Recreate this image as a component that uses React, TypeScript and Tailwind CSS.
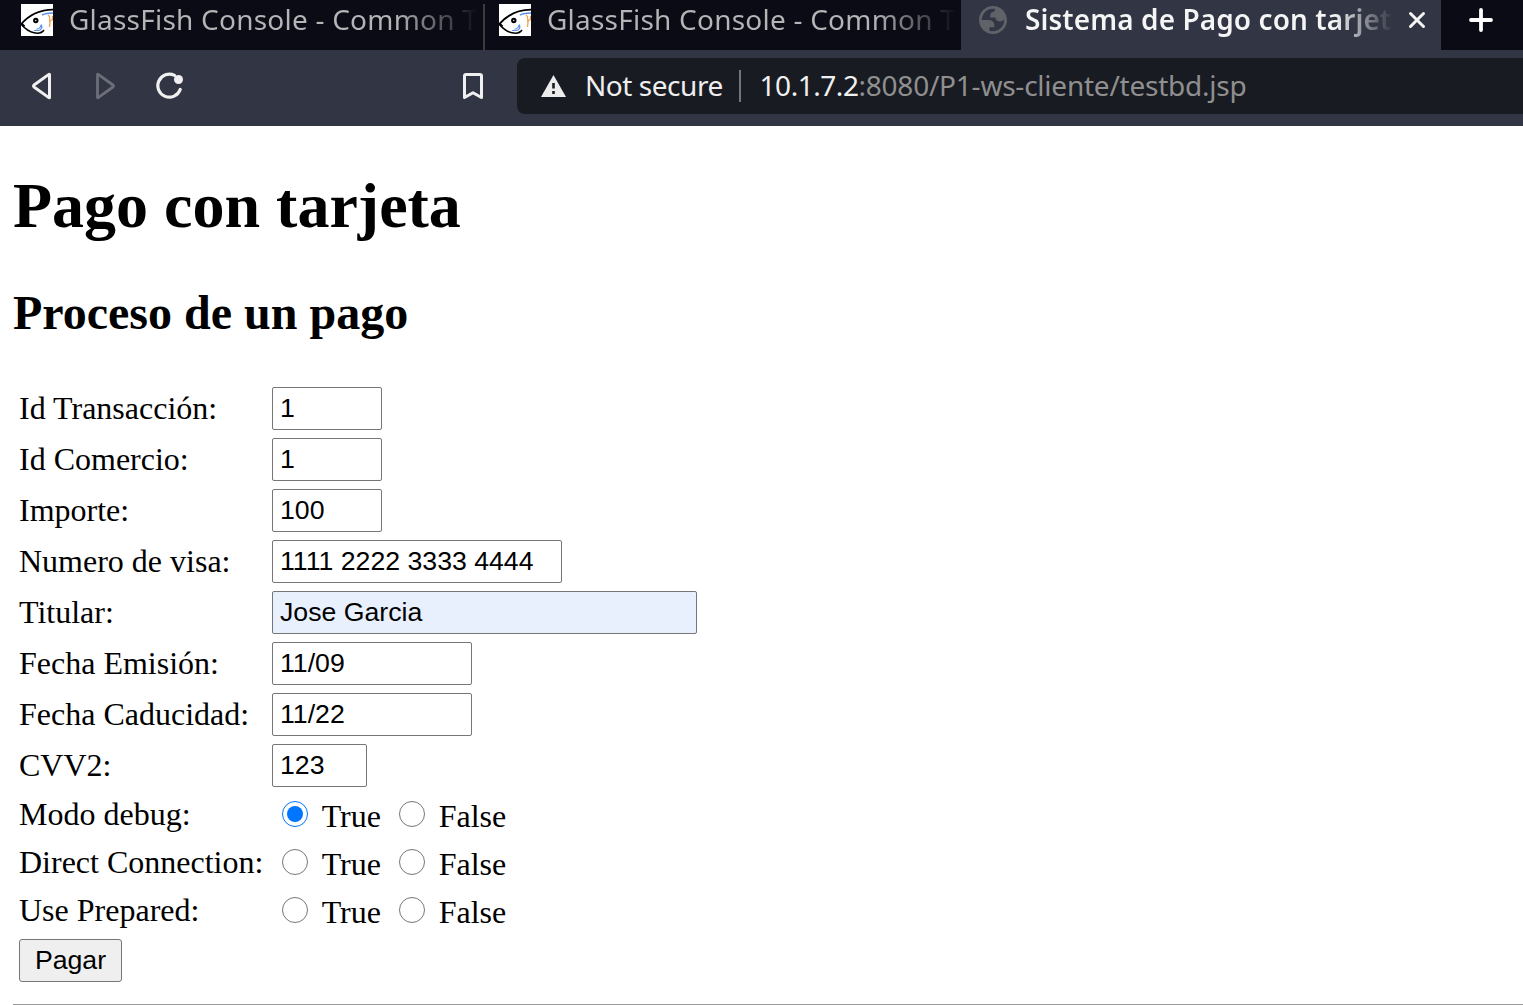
import type { ReactNode } from 'react';

const chromeFont = "font-['Noto_Sans',sans-serif]";

function FishIcon() {
  return (
    <svg width="32" height="32" viewBox="0 0 32 32" fill="none" className="shrink-0 bg-white">
      <path d="M21 11C24 9.500 28 9 32 9" stroke="#5b8fee" strokeWidth="1.700" />
      <path d="M20.300 20.500C21.500 23 20.500 26.500 17 26.500H13M20 21C19.500 23.500 18 25 15.500 25.200" stroke="#5b8fee" strokeWidth="1.200" />
      <path d="M27 11C28.800 12 29 14 28.700 17C29.500 19 28.500 20.500 28.500 23M29 17L31.500 15.500V12" stroke="#f0a04b" strokeWidth="1.300" />
      <path d="M0 20.500C7 12 18 6 32 5.700" stroke="#000" strokeWidth="1.800" />
      <path d="M0 20C3 23.500 7 27.500 13 28.800C17 29.600 21 29 23 26" stroke="#000" strokeWidth="1.500" />
      <path d="M0.500 19.500L3.500 22.500" stroke="#000" strokeWidth="2" />
      <circle cx="14.800" cy="16.500" r="1.700" stroke="#000" strokeWidth="2" />
    </svg>
  );
}

function InactiveTab({ divider }: { divider?: boolean }) {
  return (
    <div className="relative flex h-[50px] w-[478px] shrink-0 pl-[21px]">
      <div className="pt-1"><FishIcon /></div>
      <div className="ml-4 h-[50px] w-[410px] overflow-hidden whitespace-nowrap bg-gradient-to-r from-[#b5b5b7] from-80% to-transparent bg-clip-text text-[28px] leading-[38px] tracking-[0.22px] text-transparent">
        GlassFish Console - Common T
      </div>
      {divider && <div className="absolute top-1 right-[-7px] h-[46px] w-[2px] bg-[#3c3c3e]" />}
    </div>
  );
}

function Field({ label, value, width, filled }: { label: string; value: string; width: string; filled?: boolean }) {
  return (
    <label className="flex h-[43px] items-center">
      <span className="w-[253px] pb-[2px] leading-9">{label}</span>
      <input
        defaultValue={value}
        className={`h-[43px] rounded-[2px] border border-[#767676] px-[7px] font-['Liberation_Sans',sans-serif] text-[26.667px] outline-none ${width} ${filled ? 'bg-[#e8f0fe]' : 'bg-white'}`}
      />
    </label>
  );
}

function Radio({ checked, children }: { checked?: boolean; children: ReactNode }) {
  return (
    <span className="flex items-center">
      <span className={`mb-[2px] flex size-[26px] items-center justify-center rounded-full border ${checked ? 'border-[#0075ff]' : 'border-[#767676]'}`}>
        {checked && <span className="size-4 rounded-full bg-[#0075ff]" />}
      </span>
      <span className="ml-[13.700px] pt-[2px] leading-9">{children}</span>
    </span>
  );
}

function RadioRow({ label, checked }: { label: string; checked?: boolean }) {
  return (
    <div className="flex h-12 items-center">
      <span className="w-[263px] pb-[2px] leading-9">{label}</span>
      <div className="w-[117px]"><Radio checked={checked}>True</Radio></div>
      <Radio>False</Radio>
    </div>
  );
}

export default function App() {
  return (
    <div className="h-[1005px] w-[1523px] overflow-hidden bg-white text-black">
      <header className={chromeFont}>
        <div className="flex h-[50px] bg-[#0b0b15]">
          <InactiveTab divider />
          <InactiveTab />
          <div className="ml-[5px] flex h-[50px] w-[480px] shrink-0 bg-[#323543] pl-[18px]">
            <svg width="28" height="28" viewBox="2 2 20 20" fill="#5f6368" className="mt-[6px] shrink-0">
              <path fillRule="evenodd" d="M12 2C6.480 2 2 6.480 2 12s4.480 10 10 10 10-4.480 10-10S17.520 2 12 2zM4 12h4.400c3.407.022 4.922 1.730 4.543 5.127H9.488v2.470a8.004 8.004 0 0 0 10.498-8.083C19.327 12.504 18.332 13 17 13c-2.137 0-3.206-.916-3.206-2.750h-3.748c-.274-2.728.683-4.092 2.870-4.092 0-.975.327-1.597.811-1.970A8.004 8.004 0 0 0 4 12z" />
            </svg>
            <div className="ml-[18px] h-[50px] w-[368px] overflow-hidden whitespace-nowrap bg-gradient-to-r from-[#f5f5f5] from-84% to-transparent bg-clip-text text-[28px] leading-[38px] font-semibold tracking-[0.08px] text-transparent">
              Sistema de Pago con tarjet
            </div>
            <svg width="18" height="18" viewBox="0 0 18 18" className="mt-[11px] ml-[15px]" fill="none" stroke="#f4f4f4" strokeWidth="3" strokeLinecap="round">
              <path d="M2.500 2.500L15.500 15.500M15.500 2.500L2.500 15.500" />
            </svg>
          </div>
          <svg width="24" height="24" viewBox="0 0 24 24" className="mt-2 ml-7" fill="none" stroke="#fff" strokeWidth="3.800" strokeLinecap="round">
            <path d="M12 2V22M2 12H22" />
          </svg>
        </div>
        <div className="flex h-[76px] items-center bg-[#323543] pb-1">
          <svg width="20" height="28" viewBox="0 0 20 28" className="ml-8 shrink-0" fill="none" stroke="#f0f0f0" strokeWidth="3" strokeLinejoin="round">
            <path d="M17.500 2.600V25.400Q17.500 26.200 16.500 25.400L2 15Q1 14 2 13L16.500 2.600Q17.500 1.800 17.500 2.600Z" />
          </svg>
          <svg width="20" height="28" viewBox="0 0 20 28" className="ml-11 shrink-0" fill="none" stroke="#6c6e79" strokeWidth="2.800" strokeLinejoin="round">
            <path d="M1.500 2.600V25.400Q1.500 26.200 2.500 25.400L17 15Q18 14 17 13L2.500 2.600Q1.500 1.800 1.500 2.600Z" />
          </svg>
          <svg width="28" height="28" viewBox="0 0 28 28" className="ml-10 shrink-0" fill="none" stroke="#f0f0f0" strokeWidth="3.200" strokeLinecap="round">
            <path d="M18.500 3.400A11.500 11.500 0 1 0 24.200 17.500" />
            <circle cx="22.500" cy="7.500" r="4.500" fill="#f0f0f0" stroke="none" />
          </svg>
          <svg width="22" height="28" viewBox="0 0 22 28" className="ml-[278px] shrink-0" fill="none" stroke="#f0f0f0" strokeWidth="3" strokeLinejoin="round">
            <path d="M2.500 4Q2.500 2.500 4 2.500H18Q19.500 2.500 19.500 4V25.500L11 20.700L2.500 25.500Z" />
          </svg>
          <div className="ml-[33px] flex h-14 flex-1 items-center rounded-l-lg bg-[#191b22] pl-6 text-[28px] whitespace-nowrap">
            <svg width="25" height="22" viewBox="0 0 25 22" className="shrink-0">
              <path d="M12.500 0L25 22H0Z" fill="#ececec" />
              <path d="M12.500 8V13.500M12.500 16V19" stroke="#191b22" strokeWidth="2.600" />
            </svg>
            <span className="ml-[19px] w-[154px] shrink-0 pb-[2px] leading-10 tracking-[-0.45px] text-[#eeeeee]">Not secure</span>
            <span className="h-8 w-[2px] shrink-0 bg-[#73757a]" />
            <span className="ml-[18.500px] pb-[2px] leading-10 tracking-[-0.23px] text-[#8f8f90]">
              <span className="tracking-[-0.45px] text-[#f0f0f0]">10.1.7.2</span>:8080/P1-ws-cliente/testbd.jsp
            </span>
          </div>
        </div>
      </header>
      <main className="pt-[43px] pl-[13px] font-['Liberation_Serif',serif] text-[32px]">
        <h1 className="text-[64px] leading-[74px] font-bold">Pago con tarjeta</h1>
        <h2 className="mt-[42px] text-[48px] leading-[55px] font-bold">Proceso de un pago</h2>
        <form className="mt-[47px] ml-[6px]" onSubmit={(e) => e.preventDefault()}>
          <div className="flex flex-col gap-2">
            <Field label="Id Transacción:" value="1" width="w-[110px]" />
            <Field label="Id Comercio:" value="1" width="w-[110px]" />
            <Field label="Importe:" value="100" width="w-[110px]" />
            <Field label="Numero de visa:" value="1111 2222 3333 4444" width="w-[290px]" />
            <Field label="Titular:" value="Jose Garcia" width="w-[425px]" filled />
            <Field label="Fecha Emisión:" value="11/09" width="w-[200px]" />
            <Field label="Fecha Caducidad:" value="11/22" width="w-[200px]" />
            <Field label="CVV2:" value="123" width="w-[95px]" />
          </div>
          <div className="mt-1">
            <RadioRow label="Modo debug:" checked />
            <RadioRow label="Direct Connection:" />
            <RadioRow label="Use Prepared:" />
          </div>
          <button className="mt-1 block h-[43px] w-[103px] rounded-[3px] border border-[#767676] bg-[#efefef] font-['Liberation_Sans',sans-serif] text-[26.667px] leading-[39px]">Pagar</button>
        </form>
        <div className="mt-[22px] h-px bg-[#9a9a9a]" />
      </main>
    </div>
  );
}
